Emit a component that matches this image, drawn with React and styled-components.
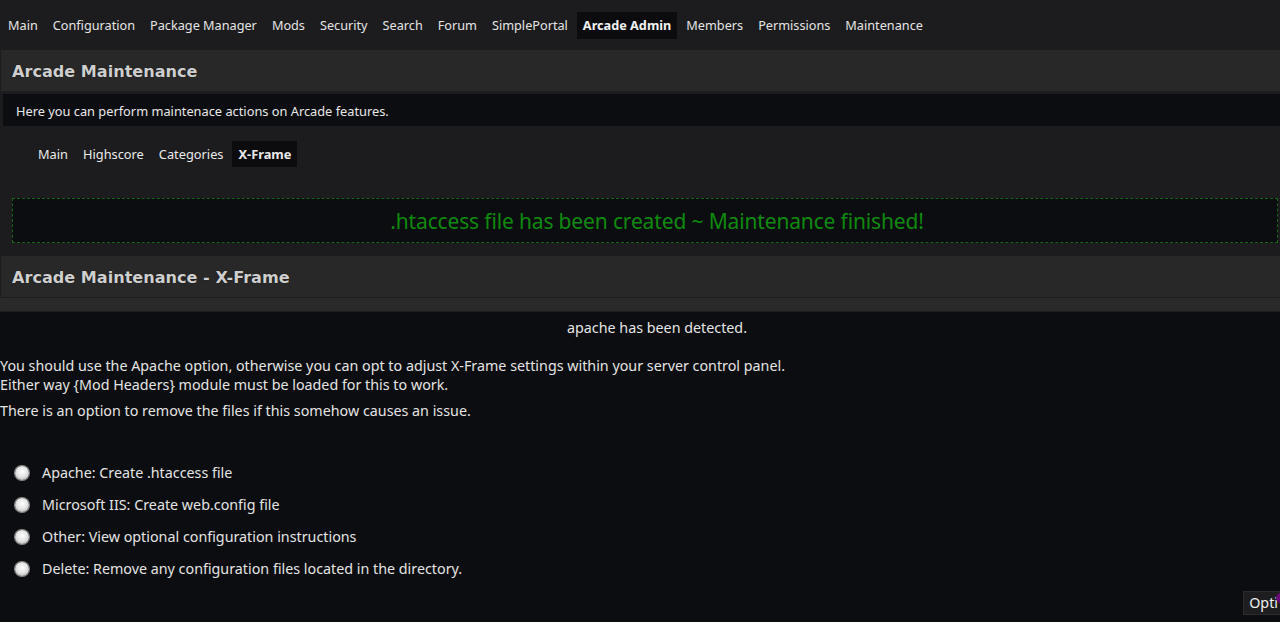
import React from 'react';
import styled, { createGlobalStyle } from 'styled-components';

const GlobalStyle = createGlobalStyle`
  html, body {
    margin: 0;
    padding: 0;
    background: #1c1c1e;
    color: #e4e4e4;
    font-family: 'Noto Sans', 'Open Sans', sans-serif;
    font-size: 13px;
  }
`;

const Page = styled.div`
  min-height: 622px;
  display: flex;
  flex-direction: column;
  background: #1c1c1e;
`;

const TopNav = styled.nav`
  height: 50px;
  display: flex;
  align-items: center;
  gap: 3px;
  padding-left: 2px;
`;

const NavItem = styled.span`
  padding: 4px 6px 5px;
  font-size: 12.7px;
  font-weight: ${p => (p.$active ? 700 : 400)};
  color: ${p => (p.$active ? '#f2f2f2' : '#e4e4e4')};
  background: ${p => (p.$active ? '#0c0c0e' : 'transparent')};
  white-space: nowrap;
`;

const CatBar = styled.h3`
  margin: 0 0 0 1px;
  height: 41px;
  display: flex;
  align-items: center;
  padding: 1px 0 0 11px;
  box-sizing: border-box;
  background: #282828;
  color: #cfcfcf;
  font-family: 'DejaVu Sans', Verdana, sans-serif;
  font-size: 16.1px;
  font-weight: 700;
  text-shadow: 0 0 1px #000;
`;

const Description = styled.div`
  margin: 3px 0 0 3px;
  height: 32px;
  display: flex;
  align-items: center;
  padding: 1px 0 0 13px;
  box-sizing: border-box;
  background: #0c0d10;
  color: #e8e8e8;
  font-size: 12.8px;
`;

const SubTabs = styled.div`
  display: flex;
  gap: 3px;
  padding: 15px 0 0 32px;
  height: 26px;
`;

const SubTab = styled.span`
  display: flex;
  align-items: center;
  padding: 0 6px;
  font-size: 12.8px;
  font-weight: ${p => (p.$active ? 700 : 400)};
  background: ${p => (p.$active ? '#0c0c0e' : 'transparent')};
  color: #eaeaea;
`;

const InfoBox = styled.div`
  margin: 31px 2px 13px 12px;
  height: 42px;
  display: flex;
  align-items: center;
  justify-content: center;
  padding: 1px 0 0 24px;
  box-sizing: content-box;
  background: #0c0d10;
  border: 1px dashed #1a641a;
  color: #0f8a0f;
  font-size: 21px;
  letter-spacing: -0.15px;
`;

const Divider = styled.div`
  height: 13px;
  background: #2a2a2a;
  border-top: 1px solid #1e1e1e;
  border-bottom: 1px solid #1e1e1e;
`;

const Content = styled.div`
  flex: 1;
  background: #0c0d10;
  padding-top: 6px;
  font-size: 14.3px;
`;

const Detected = styled.p`
  margin: 0;
  text-align: center;
  padding-left: 34px;
  line-height: 19px;
`;

const Para = styled.p`
  margin: ${p => p.$top || 0}px 0 0;
  line-height: 19px;
`;

const Options = styled.ul`
  list-style: none;
  margin: 43px 0 0;
  padding: 0 0 0 15px;
  display: flex;
  flex-direction: column;
  gap: 13px;
`;

const Option = styled.li`
  display: flex;
  align-items: center;
  gap: 13px;
  height: 19px;
`;

const Radio = styled.span`
  width: 14px;
  height: 14px;
  border-radius: 50%;
  background: radial-gradient(circle at 50% 40%, #ffffff 0%, #e6e6e6 45%, #a9a9a9 100%);
  box-shadow: 0 0 0 1px #8a8a8a;
`;

const FloatTab = styled.div`
  position: fixed;
  right: 0;
  bottom: 7px;
  padding: 0 2px 1px 5px;
  background: #1e1e20;
  border: 1px solid #2c2c2c;
  border-right: none;
  font-size: 14.3px;
  line-height: 21px;
  color: #f0f0f0;
  overflow: hidden;
`;

const Dot = styled.span`
  position: absolute;
  right: -6px;
  top: 1px;
  width: 10px;
  height: 10px;
  border-radius: 50%;
  background: #6a0a7a;
`;

const navItems = [
  'Main', 'Configuration', 'Package Manager', 'Mods', 'Security', 'Search',
  'Forum', 'SimplePortal', 'Arcade Admin', 'Members', 'Permissions', 'Maintenance',
];

const subTabs = ['Main', 'Highscore', 'Categories', 'X-Frame'];

const options = [
  'Apache: Create .htaccess file',
  'Microsoft IIS: Create web.config file',
  'Other: View optional configuration instructions',
  'Delete: Remove any configuration files located in the directory.',
];

export default function App() {
  return (
    <Page>
      <GlobalStyle />
      <TopNav>
        {navItems.map(item => (
          <NavItem key={item} $active={item === 'Arcade Admin'}>{item}</NavItem>
        ))}
      </TopNav>

      <CatBar>Arcade Maintenance</CatBar>
      <Description>Here you can perform maintenace actions on Arcade features.</Description>

      <SubTabs>
        {subTabs.map(tab => (
          <SubTab key={tab} $active={tab === 'X-Frame'}>{tab}</SubTab>
        ))}
      </SubTabs>

      <InfoBox>.htaccess file has been created ~ Maintenance finished!</InfoBox>

      <CatBar>Arcade Maintenance - X-Frame</CatBar>
      <Divider />

      <Content>
        <Detected>apache has been detected.</Detected>
        <Para $top={19}>
          You should use the Apache option, otherwise you can opt to adjust X-Frame settings within your server control panel.
          <br />
          Either way {'{Mod Headers}'} module must be loaded for this to work.
        </Para>
        <Para $top={7}>There is an option to remove the files if this somehow causes an issue.</Para>

        <Options>
          {options.map(opt => (
            <Option key={opt}>
              <Radio />
              {opt}
            </Option>
          ))}
        </Options>
      </Content>

      <FloatTab>Opti<Dot /></FloatTab>
    </Page>
  );
}
